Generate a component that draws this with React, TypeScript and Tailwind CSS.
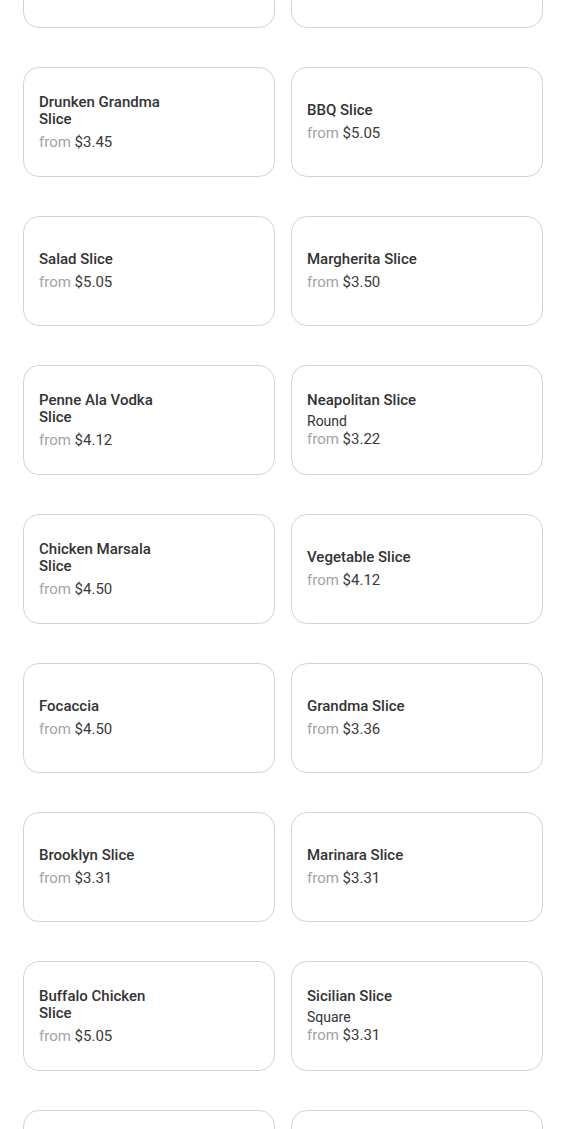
import React from "react";

type Item = { name: string; sub?: string; price: string };

const items: (Item | null)[] = [
  null,
  null,
  { name: "Drunken Grandma Slice", price: "$3.45" },
  { name: "BBQ Slice", price: "$5.05" },
  { name: "Salad Slice", price: "$5.05" },
  { name: "Margherita Slice", price: "$3.50" },
  { name: "Penne Ala Vodka Slice", price: "$4.12" },
  { name: "Neapolitan Slice", sub: "Round", price: "$3.22" },
  { name: "Chicken Marsala Slice", price: "$4.50" },
  { name: "Vegetable Slice", price: "$4.12" },
  { name: "Focaccia", price: "$4.50" },
  { name: "Grandma Slice", price: "$3.36" },
  { name: "Brooklyn Slice", price: "$3.31" },
  { name: "Marinara Slice", price: "$3.31" },
  { name: "Buffalo Chicken Slice", price: "$5.05" },
  { name: "Sicilian Slice", sub: "Square", price: "$3.31" },
  null,
  null,
];

function Card({ item }: { item: Item | null }) {
  return (
    <div className="h-[110px] rounded-[16px] border border-[#d4d4d4] bg-white px-[15px] flex flex-col justify-center">
      {item && (
        <>
          <div className="max-w-[132px] text-[15px] leading-[17px] font-medium text-[#333333]">
            {item.name}
          </div>
          {item.sub && (
            <div className="mt-[3px] text-[14px] leading-[18px] text-[#333333]">{item.sub}</div>
          )}
          <div
            className={
              (item.sub ? "mt-0" : "mt-[5px]") +
              " text-[15px] leading-[18px]"
            }
          >
            <span className="text-[#a3a3a3]">from </span>
            <span className="text-[#3a3a3a]">{item.price}</span>
          </div>
        </>
      )}
    </div>
  );
}

export default function App() {
  return (
    <div
      className="w-[575px] h-[1129px] overflow-hidden bg-white"
      style={{ fontFamily: "Roboto, 'Noto Sans', sans-serif" }}
    >
      <div className="mt-[-82px] pl-[23px] grid grid-cols-[252px_252px] gap-x-[16px] gap-y-[39px]">
        {items.map((it, i) => (
          <Card key={i} item={it} />
        ))}
      </div>
    </div>
  );
}
